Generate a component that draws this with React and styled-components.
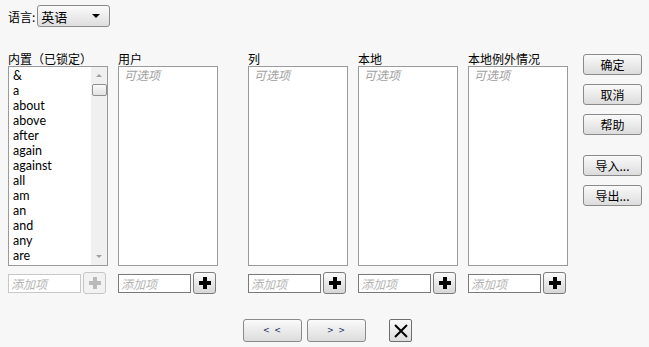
import React from "react";
import styled, { createGlobalStyle } from "styled-components";

const GlobalStyle = createGlobalStyle`
  html, body {
    margin: 0;
    padding: 0;
    background: #f7f7f7;
  }
  body {
    font-family: "Noto Sans CJK SC", "Noto Sans", sans-serif;
    font-size: 12px;
    color: #000;
  }
`;

const builtIn = [
  "&", "a", "about", "above", "after", "again", "against",
  "all", "am", "an", "and", "any", "are",
];

const columns = [
  { key: "user", label: "用户" },
  { key: "col", label: "列", spaced: true },
  { key: "local", label: "本地" },
  { key: "except", label: "本地例外情况" },
];

const App = () => {
  return (
    <>
      <GlobalStyle />
      <Page>
        <TopRow>
          <FieldLabel>语言:</FieldLabel>
          <Select>
            <span>英语</span>
            <Caret />
          </Select>
        </TopRow>

        <Main>
          <Columns>
            <Column>
              <ColLabel>内置（已锁定）</ColLabel>
              <ListBox>
                <Items>
                  {builtIn.map((w) => (
                    <Item key={w}>{w}</Item>
                  ))}
                </Items>
                <ScrollBar>
                  <Arrow $up />
                  <Thumb />
                  <Track />
                  <Arrow />
                </ScrollBar>
              </ListBox>
              <AddRow>
                <AddInput $disabled>添加项</AddInput>
                <PlusButton $disabled>
                  <PlusIcon $disabled />
                </PlusButton>
              </AddRow>
            </Column>

            {columns.map((c) => (
              <Column key={c.key} $spaced={c.spaced}>
                <ColLabel>{c.label}</ColLabel>
                <ListBox>
                  <Optional>可选项</Optional>
                </ListBox>
                <AddRow>
                  <AddInput>添加项</AddInput>
                  <PlusButton>
                    <PlusIcon />
                  </PlusButton>
                </AddRow>
              </Column>
            ))}
          </Columns>

          <Actions>
            <ActionButton>确定</ActionButton>
            <ActionButton>取消</ActionButton>
            <ActionButton>帮助</ActionButton>
            <ActionButton $gap>导入...</ActionButton>
            <ActionButton>导出...</ActionButton>
          </Actions>
        </Main>

        <Footer>
          <NavButton>&lt; &lt;</NavButton>
          <NavButton>&gt; &gt;</NavButton>
          <CloseButton>
            <svg width="16" height="16" viewBox="0 0 16 16">
              <path d="M2 2 L14 14 M14 2 L2 14" stroke="#000" strokeWidth="2" />
            </svg>
          </CloseButton>
        </Footer>
      </Page>
    </>
  );
};

const Page = styled.div`
  width: 649px;
  height: 347px;
  box-sizing: border-box;
  padding: 5px 8px 0 8px;
  display: flex;
  flex-direction: column;
`;

const TopRow = styled.div`
  display: flex;
  align-items: center;
  gap: 2px;
  height: 22px;
`;

const FieldLabel = styled.span`
  font-size: 12px;
`;

const Select = styled.div`
  width: 73px;
  height: 22px;
  box-sizing: border-box;
  border: 1px solid #8a8a8a;
  border-radius: 3px;
  background: linear-gradient(#fbfbfb, #dedede);
  display: flex;
  align-items: center;
  justify-content: space-between;
  padding: 0 9px 0 3px;
  font-size: 13px;
`;

const Caret = styled.span`
  width: 0;
  height: 0;
  border-left: 4px solid transparent;
  border-right: 4px solid transparent;
  border-top: 4px solid #000;
`;

const Main = styled.div`
  display: flex;
  margin-top: 24px;
`;

const Columns = styled.div`
  display: flex;
  gap: 10px;
`;

const Column = styled.div`
  display: flex;
  flex-direction: column;
  width: 100px;
  margin-left: ${(p) => (p.$spaced ? "20px" : "0")};
`;

const ColLabel = styled.div`
  font-size: 12px;
  line-height: 15px;
  height: 15px;
  white-space: nowrap;
`;

const ListBox = styled.div`
  width: 100px;
  height: 200px;
  box-sizing: border-box;
  border: 1px solid #9a9a9a;
  background: #fff;
  display: flex;
  position: relative;
`;

const Items = styled.div`
  flex: 1;
  padding-top: 1px;
  padding-left: 4px;
`;

const Item = styled.div`
  font-family: Lato, "Noto Sans", sans-serif;
  font-size: 12.5px;
  line-height: 15px;
  height: 15px;
`;

const ScrollBar = styled.div`
  width: 16px;
  display: flex;
  flex-direction: column;
  align-items: center;
  background: #f0f0f0;
  padding: 5px 0;
  box-sizing: border-box;
`;

const Arrow = styled.span`
  width: 0;
  height: 0;
  border-left: 3px solid transparent;
  border-right: 3px solid transparent;
  ${(p) =>
    p.$up
      ? "border-bottom: 3px solid #a0a0a0;"
      : "border-top: 3px solid #a0a0a0;"}
  margin: 2px 0;
`;

const Thumb = styled.div`
  width: 13px;
  height: 10px;
  margin-top: 5px;
  border: 1px solid #8e8e8e;
  border-radius: 2px;
  background: linear-gradient(#fafafa, #e2e2e2);
`;

const Track = styled.div`
  flex: 1;
`;

const Optional = styled.div`
  font-style: italic;
  color: #a0a0a0;
  font-size: 12px;
  line-height: 16px;
  padding-left: 5px;
`;

const AddRow = styled.div`
  display: flex;
  align-items: center;
  gap: 2px;
  margin-top: 6px;
`;

const AddInput = styled.div`
  width: 73px;
  height: 19px;
  box-sizing: border-box;
  border: 1px solid ${(p) => (p.$disabled ? "#c8c8c8" : "#7a7a7a")};
  background: #fff;
  color: #b4b4b4;
  font-style: italic;
  font-size: 12px;
  line-height: 17px;
  padding-left: 2px;
`;

const PlusButton = styled.div`
  width: 23px;
  height: 22px;
  box-sizing: border-box;
  border: 1px solid ${(p) => (p.$disabled ? "#c6c6c6" : "#7c7c7c")};
  border-radius: 3px;
  background: ${(p) =>
    p.$disabled ? "#f2f2f2" : "linear-gradient(#fbfbfb, #d6d6d6)"};
  display: flex;
  align-items: center;
  justify-content: center;
`;

const PlusIcon = styled.span`
  position: relative;
  width: 12px;
  height: 12px;
  &::before,
  &::after {
    content: "";
    position: absolute;
    background: ${(p) => (p.$disabled ? "#b9b9b9" : "#000")};
  }
  &::before {
    left: 4px;
    top: 0;
    width: 4px;
    height: 12px;
  }
  &::after {
    left: 0;
    top: 4px;
    width: 12px;
    height: 4px;
  }
`;

const Actions = styled.div`
  display: flex;
  flex-direction: column;
  gap: 9px;
  margin-left: 15px;
  margin-top: 3px;
`;

const ActionButton = styled.div`
  width: 59px;
  height: 21px;
  box-sizing: border-box;
  border: 1px solid #8a8a8a;
  border-radius: 3px;
  background: linear-gradient(#fafafa, #dcdcdc);
  display: flex;
  align-items: center;
  justify-content: center;
  font-size: 12px;
  margin-top: ${(p) => (p.$gap ? "11px" : "0")};
`;

const Footer = styled.div`
  display: flex;
  align-items: center;
  margin-top: 25px;
  padding-left: 235px;
  gap: 5px;
`;

const NavButton = styled.div`
  width: 59px;
  height: 23px;
  box-sizing: border-box;
  border: 1px solid #8a8a8a;
  border-radius: 3px;
  background: linear-gradient(#fafafa, #dcdcdc);
  display: flex;
  align-items: center;
  justify-content: center;
  font-family: "DejaVu Sans", sans-serif;
  font-size: 8px;
  color: #1a2a5a;
  letter-spacing: 1px;
`;

const CloseButton = styled.div`
  width: 23px;
  height: 23px;
  box-sizing: border-box;
  border: 1px solid #6e6e6e;
  border-radius: 2px;
  background: linear-gradient(#fafafa, #dcdcdc);
  display: flex;
  align-items: center;
  justify-content: center;
  margin-left: 18px;
`;

export default App;
